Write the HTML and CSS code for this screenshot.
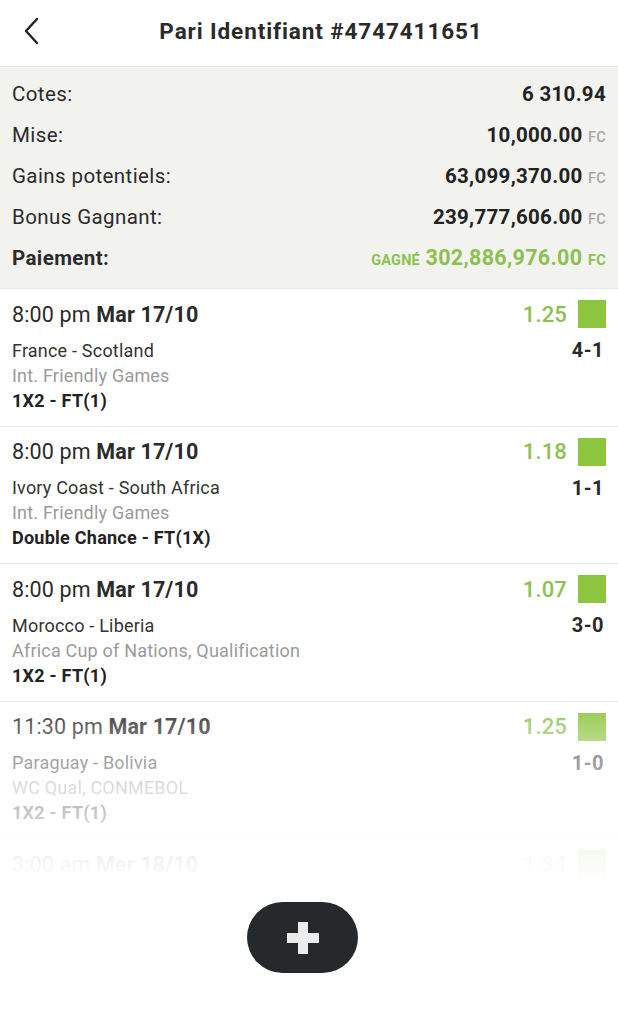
FILE: index.html
```html
<!DOCTYPE html>
<html lang="fr">
<head>
<meta charset="utf-8">
<title>Pari Identifiant #4747411651</title>
<link rel="stylesheet" href="styles.css">
</head>
<body>
<div class="screen">
  <header class="topbar">
    <button class="back" aria-label="Retour">
      <svg width="16" height="28" viewBox="0 0 16 28"><path d="M14 2 L3 14 L14 26" fill="none" stroke="#222" stroke-width="2.4" stroke-linecap="round" stroke-linejoin="round"/></svg>
    </button>
    <h1 class="title">Pari Identifiant #4747411651</h1>
  </header>

  <section class="summary">
    <div class="srow"><span>Cotes:</span><span class="val">6 310.94</span></div>
    <div class="srow"><span>Mise:</span><span class="val">10,000.00 <small>FC</small></span></div>
    <div class="srow"><span>Gains potentiels:</span><span class="val">63,099,370.00 <small>FC</small></span></div>
    <div class="srow"><span>Bonus Gagnant:</span><span class="val">239,777,606.00 <small>FC</small></span></div>
    <div class="srow strong"><span>Paiement:</span><span class="val win"><small class="tag">GAGNÉ</small> 302,886,976.00 <small>FC</small></span></div>
  </section>

  <div class="listwrap">
    <ul class="bets">
      <li class="bet">
        <div class="line1"><span class="when">8:00 pm <b>Mar 17/10</b></span><span class="odd">1.25<i class="sq"></i></span></div>
        <div class="line2"><span>France - Scotland</span><b class="score">4-1</b></div>
        <div class="league">Int. Friendly Games</div>
        <div class="market">1X2 - FT(1)</div>
      </li>
      <li class="bet">
        <div class="line1"><span class="when">8:00 pm <b>Mar 17/10</b></span><span class="odd">1.18<i class="sq"></i></span></div>
        <div class="line2"><span>Ivory Coast - South Africa</span><b class="score">1-1</b></div>
        <div class="league">Int. Friendly Games</div>
        <div class="market">Double Chance - FT(1X)</div>
      </li>
      <li class="bet">
        <div class="line1"><span class="when">8:00 pm <b>Mar 17/10</b></span><span class="odd">1.07<i class="sq"></i></span></div>
        <div class="line2"><span>Morocco - Liberia</span><b class="score">3-0</b></div>
        <div class="league">Africa Cup of Nations, Qualification</div>
        <div class="market">1X2 - FT(1)</div>
      </li>
      <li class="bet">
        <div class="line1"><span class="when">11:30 pm <b>Mar 17/10</b></span><span class="odd">1.25<i class="sq"></i></span></div>
        <div class="line2"><span>Paraguay - Bolivia</span><b class="score">1-0</b></div>
        <div class="league">WC Qual, CONMEBOL</div>
        <div class="market">1X2 - FT(1)</div>
      </li>
      <li class="bet last">
        <div class="line1"><span class="when">3:00 am <b>Mer 18/10</b></span><span class="odd">1.34<i class="sq"></i></span></div>
      </li>
    </ul>
    <div class="fade"></div>
  </div>

  <div class="fabzone">
    <button class="fab" aria-label="Ajouter">
      <svg width="32" height="32" viewBox="0 0 32 32"><path d="M11 0h10v11h11v10H21v11H11V21H0V11h11z" fill="#ececec"/></svg>
    </button>
  </div>
</div>
</body>
</html>
```

FILE: styles.css
```css
* { box-sizing: border-box; }
html, body { margin: 0; padding: 0; background: #fff; }
body { font-family: Roboto, "Noto Sans", "Liberation Sans", sans-serif; color: #222; }
.screen { width: 618px; height: 1030px; overflow: hidden; display: flex; flex-direction: column; }

.topbar { height: 67px; padding-bottom: 5px; display: flex; align-items: center; border-bottom: 1px solid #e8e8e4; }
.back { border: 0; background: none; padding: 0; margin-left: 23px; width: 16px; height: 28px; display: flex; }
.title { flex: 1; margin: 0 0 0 -39px; padding-left: 24px; text-align: center; font-size: 22.5px; font-weight: 700; color: #2a2a2a; letter-spacing: 0.9px; }

.summary { background: #f2f2ef; padding: 6px 12px 10px 12px; border-bottom: 1px solid #e6e6e3; }
.srow { height: 41px; display: flex; align-items: center; justify-content: space-between; font-size: 20.5px; letter-spacing: 0.4px; color: #2b2b2b; }
.srow .val { font-weight: 700; color: #222; letter-spacing: 0.3px; }
.srow small { font-size: 14.5px; font-weight: 500; color: #a8a8a8; letter-spacing: 0.3px; }
.srow.strong > span:first-child { font-weight: 700; }
.val.win { color: #8cc152; font-size: 21.5px; }
.val.win small { color: #8cc152; font-weight: 700; }
.val.win small.tag { font-size: 14.5px; letter-spacing: 0.2px; }

.listwrap { position: relative; height: 592px; overflow: hidden; }
.bets { list-style: none; margin: 0; padding: 0; }
.bet { padding: 11px 12px 12px 12px; border-bottom: 1px solid #ebebeb; height: 137.5px; }
.line1 { height: 28px; display: flex; align-items: center; justify-content: space-between; font-size: 21.5px; letter-spacing: 0.15px; color: #2b2b2b; }
.line1 b { font-weight: 700; }
.odd { display: flex; align-items: center; color: #8cc152; font-weight: 500; font-size: 22px; }
.sq { display: inline-block; width: 28px; height: 28px; background: #8cc63f; margin-left: 11px; }
.line2 { margin-top: 9.5px; height: 25px; display: flex; align-items: center; justify-content: space-between; font-size: 18px; letter-spacing: 0.2px; color: #333; }
.score { font-size: 20px; font-weight: 700; color: #2a2a2a; margin-right: 2px; letter-spacing: 0.5px; }
.league { height: 25px; line-height: 25px; font-size: 18px; letter-spacing: 0.2px; color: #9a9a9a; }
.market { height: 25px; line-height: 25px; font-size: 18px; letter-spacing: 0.25px; font-weight: 700; color: #222; }

.fade { position: absolute; left: 0; right: 0; top: 410px; bottom: 0; background: linear-gradient(to bottom, rgba(255,255,255,0) 0%, rgba(255,255,255,0.5) 30%, rgba(255,255,255,0.92) 85%, #fff 100%); }

.fabzone { flex: 1; display: flex; justify-content: center; align-items: flex-start; padding-top: 21px; }
.fab { width: 111px; height: 71px; border-radius: 36px; border: 0; background: #25292b; display: flex; align-items: center; justify-content: center; margin-right: 13px; padding: 0; }
```
